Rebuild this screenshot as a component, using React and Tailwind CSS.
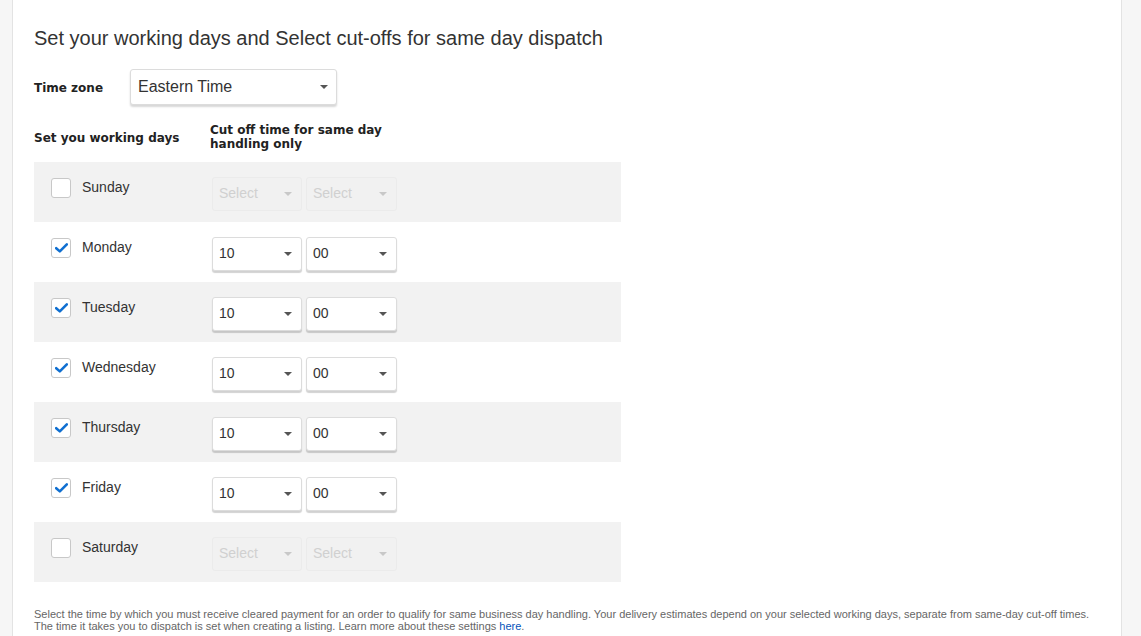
import React from 'react';

const days = [
    { name: 'Sunday', on: false },
    { name: 'Monday', on: true },
    { name: 'Tuesday', on: true },
    { name: 'Wednesday', on: true },
    { name: 'Thursday', on: true },
    { name: 'Friday', on: true },
    { name: 'Saturday', on: false },
];

// Small caret used inside the dropdowns
const Caret = ({ muted }) => (
    <svg width="8" height="4" viewBox="0 0 8 4" className="shrink-0">
        <path d="M0 0 L8 0 L4 4 Z" fill={muted ? '#c8c8c8' : '#555'} />
    </svg>
);

const TimeSelect = ({ value, width, disabled }) => (
    <div
        className={`flex h-[34px] items-center justify-between rounded-[3px] border pl-[6px] pr-[9px] text-[14px] ${
            disabled
                ? 'border-[#ebebeb] bg-[#f1f1f1] text-[#d0d0d0] shadow-none'
                : 'border-[#dcdcdc] bg-white text-[#333] shadow-[0_2px_1px_rgba(0,0,0,0.18)]'
        }`}
        style={{ width }}
    >
        <span>{value}</span>
        <Caret muted={disabled} />
    </div>
);

const Checkbox = ({ checked }) => (
    <div className="flex h-[20px] w-[20px] items-center justify-center rounded-[3px] border border-[#c8c8c8] bg-white">
        {checked && (
            <svg width="13" height="10" viewBox="0 0 13 10">
                <path d="M1.2 5.2 L4.8 8.4 L11.8 1.4" fill="none" stroke="#0f6fd1" strokeWidth="2.6" strokeLinecap="round" strokeLinejoin="round" />
            </svg>
        )}
    </div>
);

export default function App() {
    return (
        <div className="flex h-[636px] w-full overflow-hidden bg-white font-['Liberation_Sans',Arial,sans-serif] text-[#333]">
            {/* left gutter */}
            <div className="w-[13px] shrink-0 border-r border-[#e3e3e3] bg-[#f6f6f6]" />

            <div className="flex-1 pl-[21px] pt-[26px]">
                <h1 className="text-[20px] leading-[24px] text-[#333]">
                    Set your working days and Select cut-offs for same day dispatch
                </h1>

                <div className="mt-[19px] flex items-center">
                    <span className="w-[96px] pt-[2px] font-['DejaVu_Sans',Verdana,sans-serif] text-[12px] font-bold text-[#222]">Time zone</span>
                    <div className="flex h-[36px] w-[207px] items-center justify-between rounded-[3px] border border-[#dcdcdc] bg-white pl-[7px] pr-[8px] text-[16px] text-[#333] shadow-[0_2px_2px_rgba(0,0,0,0.16)]">
                        <span>Eastern Time</span>
                        <Caret />
                    </div>
                </div>

                <div className="mt-[18px] flex items-center font-['DejaVu_Sans',Verdana,sans-serif] text-[12px] font-bold leading-[14px] text-[#222]">
                    <span className="w-[176px] pt-[2px]">Set you working days</span>
                    <span className="w-[190px]">Cut off time for same day handling only</span>
                </div>

                <div className="mt-[11px] w-[587px]">
                    {days.map((d, i) => (
                        <div
                            key={d.name}
                            className={`flex h-[60px] items-center ${i % 2 === 0 ? 'bg-[#f2f2f2]' : 'bg-white'}`}
                        >
                            <div className="flex w-[178px] items-center pl-[17px] pb-[9px]">
                                <Checkbox checked={d.on} />
                                <span className="ml-[11px] text-[14px] text-[#333]">{d.name}</span>
                            </div>
                            <div className="flex gap-[4px] pt-[3px]">
                                <TimeSelect value={d.on ? '10' : 'Select'} width={90} disabled={!d.on} />
                                <TimeSelect value={d.on ? '00' : 'Select'} width={91} disabled={!d.on} />
                            </div>
                        </div>
                    ))}
                </div>

                <p className="mt-[26px] text-[11px] leading-[12px] text-[#666]">
                    Select the time by which you must receive cleared payment for an order to qualify for same business day handling. Your delivery estimates depend on your selected working days, separate from same-day cut-off times.
                    <br />
                    The time it takes you to dispatch is set when creating a listing. Learn more about these settings{' '}
                    <a className="text-[#0654ba]">here</a>.
                </p>
            </div>

            {/* right gutter */}
            <div className="w-[20px] shrink-0 border-l border-[#e3e3e3] bg-[#f6f6f6]" />
        </div>
    );
}
